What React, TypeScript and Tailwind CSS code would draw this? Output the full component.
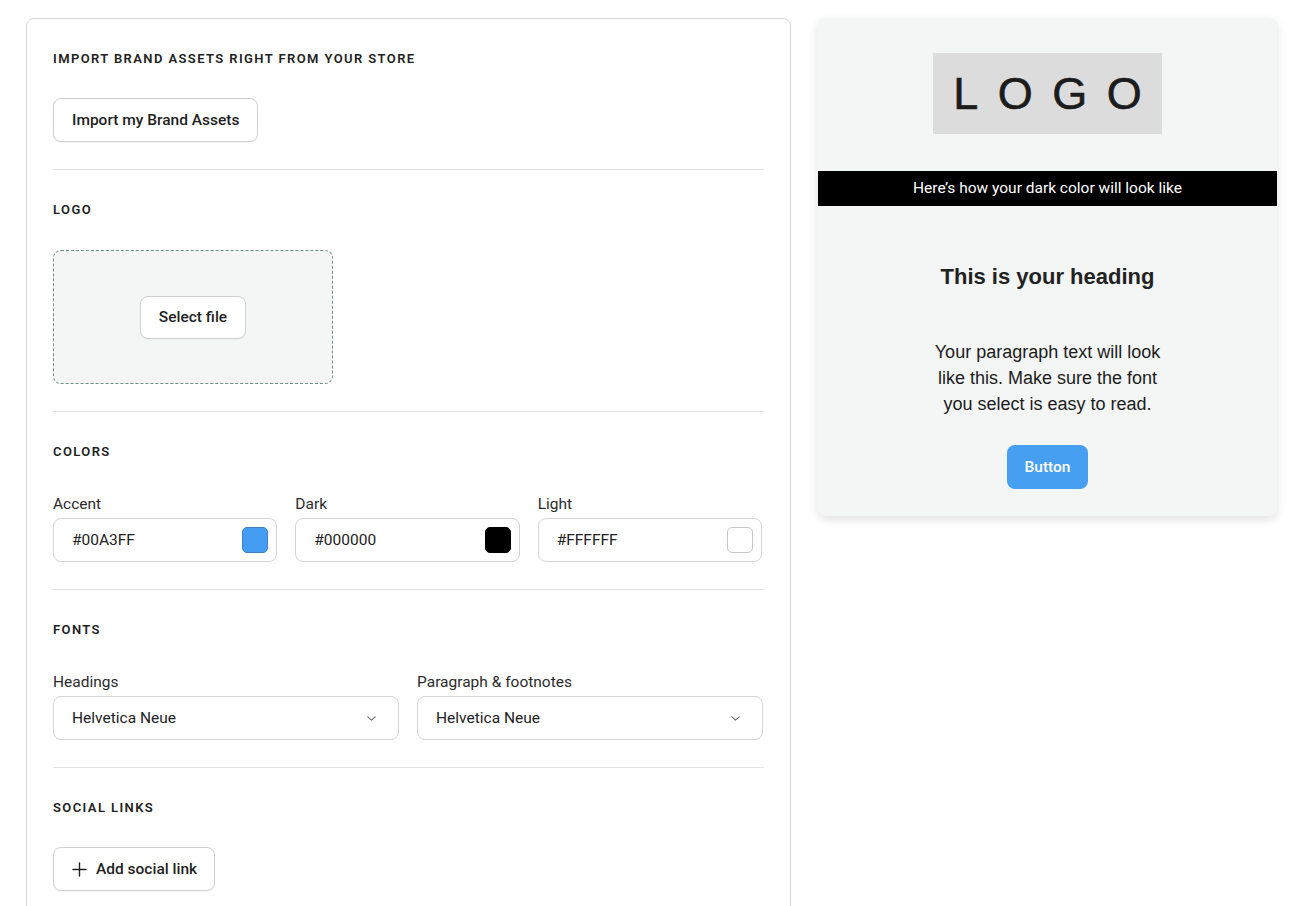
import React from "react";

const Heading = ({ children, mb = "mb-[30px]" }: { children: React.ReactNode; mb?: string }) => (
  <div className={`h-5 pt-[2px] flex items-center text-[13px] font-semibold tracking-[1.4px] text-[#222] ${mb}`}>
    {children}
  </div>
);

const Divider = () => <div className="h-px bg-[#e3e3e3]" />;

const Chevron = () => (
  <svg width="9" height="5" viewBox="0 0 9 5" fill="none">
    <path d="M0.8 0.8l3.7 3.4 3.7-3.4" stroke="#6b6b6b" strokeWidth="1.1" strokeLinecap="round" strokeLinejoin="round" />
  </svg>
);

const ColorField = ({ label, value, swatch, border }: { label: string; value: string; swatch: string; border: string }) => (
  <div className="flex flex-col">
    <div className="h-[22px] mb-[3px] text-[15.5px] text-[#2b2b2b] leading-[22px]">{label}</div>
    <div className="h-11 rounded-lg border border-[#d4d4d4] flex items-center justify-between pl-[18px] pr-[8px] bg-white">
      <span className="text-[15.5px] text-[#222] pt-[2px]">{value}</span>
      <span className="w-[26px] h-[26px] rounded-[5px] border" style={{ backgroundColor: swatch, borderColor: border }} />
    </div>
  </div>
);

const SelectField = ({ label, value }: { label: string; value: string }) => (
  <div className="flex flex-col">
    <div className="h-[22px] mb-[3px] text-[15.5px] text-[#2b2b2b] leading-[22px]">{label}</div>
    <div className="h-11 rounded-lg border border-[#d4d4d4] flex items-center justify-between pl-[18px] pr-[22px] bg-white">
      <span className="text-[15.5px] text-[#222] pt-[2px]">{value}</span>
      <Chevron />
    </div>
  </div>
);

const OutlineButton = ({ children, className = "" }: { children: React.ReactNode; className?: string }) => (
  <button className={`h-11 pt-[2px] rounded-lg border border-[#d0d0d0] bg-white text-[15.5px] font-medium text-[#1f1f1f] flex items-center shadow-[0_1px_1px_rgba(0,0,0,0.04)] ${className}`}>
    {children}
  </button>
);

export default function App() {
  return (
    <div className="min-h-[906px] bg-white font-['Roboto',sans-serif] flex items-start gap-[27px] pl-[26px] pt-[18px]">
      {/* Left settings card */}
      <div className="w-[765px] rounded-lg border border-[#d6d6d6] px-[26px] bg-white">
        <section className="pt-[29px] pb-[27px]">
          <Heading>IMPORT BRAND ASSETS RIGHT FROM YOUR STORE</Heading>
          <OutlineButton className="px-[18px]">Import my Brand Assets</OutlineButton>
        </section>
        <Divider />
        <section className="pt-[29px] pb-[27px]">
          <Heading mb="mb-[31px]">LOGO</Heading>
          <div className="w-[280px] h-[134px] rounded-lg border border-dashed border-[#6f8f88] bg-[#f4f5f5] flex items-center justify-center">
            <OutlineButton className="px-[18px] h-[43px]">Select file</OutlineButton>
          </div>
        </section>
        <Divider />
        <section className="pt-[29px] pb-[27px]">
          <Heading mb="mb-[32px]">COLORS</Heading>
          <div className="grid grid-cols-3 gap-x-[18px] pr-[2px]">
            <ColorField label="Accent" value="#00A3FF" swatch="#449df2" border="#3b82c4" />
            <ColorField label="Dark" value="#000000" swatch="#000000" border="#000000" />
            <ColorField label="Light" value="#FFFFFF" swatch="#ffffff" border="#c8c8c8" />
          </div>
        </section>
        <Divider />
        <section className="pt-[29px] pb-[27px]">
          <Heading mb="mb-[32px]">FONTS</Heading>
          <div className="grid grid-cols-2 gap-x-[18px] pr-[1px]">
            <SelectField label="Headings" value="Helvetica Neue" />
            <SelectField label="Paragraph & footnotes" value="Helvetica Neue" />
          </div>
        </section>
        <Divider />
        <section className="pt-[29px] pb-[27px]">
          <Heading>SOCIAL LINKS</Heading>
          <OutlineButton className="pl-[18px] pr-[17px] gap-[9px]">
            <svg width="15" height="15" viewBox="0 0 15 15" fill="none" className="-mt-[2px]">
              <path d="M7.5 1v13M1 7.5h13" stroke="#1f1f1f" strokeWidth="1.4" strokeLinecap="round" />
            </svg>
            Add social link
          </OutlineButton>
        </section>
      </div>

      {/* Right preview card */}
      <div className="w-[459px] rounded-lg bg-[#f4f5f5] shadow-[0_3px_10px_rgba(0,0,0,0.13)] pt-[35px] pb-[27px] flex flex-col items-center">
        <div className="w-[229px] h-[81px] bg-[#dcdcdc] flex items-center justify-center">
          <span className="font-['Liberation_Sans',Arial,sans-serif] text-[45px] leading-none tracking-[19.5px] pl-[19.5px] text-[#1c1c1c] [-webkit-text-stroke:0.6px_#1c1c1c]">
            LOGO
          </span>
        </div>
        <div className="mt-[37px] w-full h-[35px] bg-black text-white text-[15.5px] flex items-center justify-center">
          Here’s how your dark color will look like
        </div>
        <div className="mt-[57px] h-7 leading-7 font-['Liberation_Sans',Arial,sans-serif] font-bold text-[22px] text-[#222]">
          This is your heading
        </div>
        <p className="mt-[48px] w-[240px] text-center font-['Liberation_Sans',Arial,sans-serif] text-[18px] leading-[26px] text-[#1c1c1c]">
          Your paragraph text will look like this. Make sure the font you select is easy to read.
        </p>
        <button className="mt-[28px] w-[81px] h-11 pt-[1px] rounded-lg bg-[#469ff0] text-white text-[15.5px] font-medium">
          Button
        </button>
      </div>
    </div>
  );
}
